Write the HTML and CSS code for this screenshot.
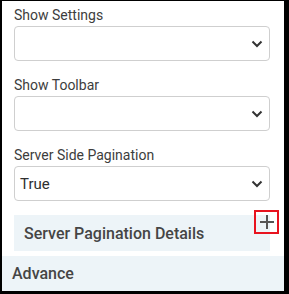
FILE: index.html
```html
<!DOCTYPE html>
<html lang="en">
<head>
  <meta charset="UTF-8" />
  <title>Grid Settings</title>
  <link rel="stylesheet" href="styles.css">
</head>
<body>
  <div class="panel">
    <div class="fields">
      <div class="field">
        <label>Show Settings</label>
        <div class="select">
          <span></span>
          <svg width="12" height="8" viewBox="0 0 12 8"><path d="M1.5 1.5 L6 6 L10.5 1.5" fill="none" stroke="#333" stroke-width="2"/></svg>
        </div>
      </div>
      <div class="field">
        <label>Show Toolbar</label>
        <div class="select">
          <span></span>
          <svg width="12" height="8" viewBox="0 0 12 8"><path d="M1.5 1.5 L6 6 L10.5 1.5" fill="none" stroke="#333" stroke-width="2"/></svg>
        </div>
      </div>
      <div class="field">
        <label>Server Side Pagination</label>
        <div class="select">
          <span>True</span>
          <svg width="12" height="8" viewBox="0 0 12 8"><path d="M1.5 1.5 L6 6 L10.5 1.5" fill="none" stroke="#333" stroke-width="2"/></svg>
        </div>
      </div>
      <div class="section">
        <span>Server Pagination Details</span>
        <button class="add">
          <svg width="14" height="14" viewBox="0 0 14 14"><path d="M7 0 V14 M0 7 H14" stroke="#555" stroke-width="2"/></svg>
        </button>
      </div>
    </div>
    <div class="advance">Advance</div>
  </div>
</body>
</html>
```

FILE: styles.css
```css
body {
  margin: 0;
  background: #000;
  font-family: Roboto, "Liberation Sans", sans-serif;
}

.panel {
  box-sizing: border-box;
  width: 289px;
  height: 294px;
  border-style: solid;
  border-color: #000;
  border-width: 1px 5px 3px 2px;
  background: #fff;
  display: flex;
  flex-direction: column;
}

.fields {
  padding: 5px 14px 0 12px;
  display: flex;
  flex-direction: column;
  gap: 15px;
}

.field label {
  display: block;
  font-size: 14px;
  line-height: 18px;
  margin-bottom: 2px;
  color: #3d3d3d;
}

.select {
  box-sizing: border-box;
  height: 35px;
  border: 1px solid #cfcfcf;
  border-radius: 4px;
  display: flex;
  align-items: center;
  justify-content: space-between;
  padding: 0 6px 0 5px;
  font-size: 15px;
  color: #2f2f2f;
}

.section {
  position: relative;
  margin-top: -1px;
  height: 36px;
  background: #edf4f8;
  display: flex;
  align-items: center;
  padding-left: 10px;
  font-size: 16px;
  font-weight: 500;
  color: #454545;
}

.add {
  position: absolute;
  top: -5px;
  right: -9px;
  box-sizing: border-box;
  width: 25px;
  height: 24px;
  padding: 0;
  border: 2px solid #e8131f;
  background: transparent;
  display: flex;
  align-items: center;
  justify-content: center;
}

.advance {
  margin-top: 5px;
  flex: 1;
  background: #edf4f8;
  display: flex;
  align-items: center;
  padding-left: 10px;
  font-size: 16px;
  font-weight: 500;
  color: #454545;
}
```
